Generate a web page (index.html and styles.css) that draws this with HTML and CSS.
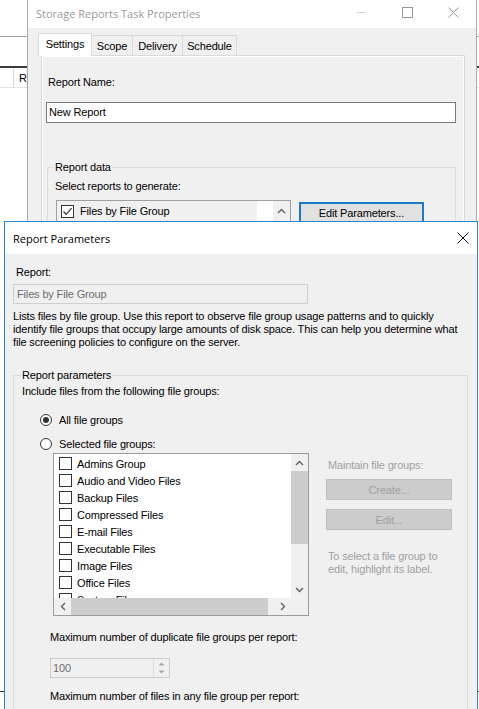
FILE: index.html
```html
<!DOCTYPE html>
<html>
<head>
<meta charset="utf-8">
<title>Report Parameters</title>
<link rel="stylesheet" href="styles.css">
</head>
<body>
<div class="desk">
  <div class="bgwin">
    <div class="bg-toolbar"></div>
    <div class="bg-gap"></div>
    <div class="bg-header"><span class="bg-col1"></span><span class="bg-col2">R</span></div>
    <div class="bg-fill"></div>
  </div>

  <div class="win storage">
    <div class="s-title">
      <span class="s-title-text">Storage Reports Task Properties</span>
      <div class="caps">
        <div class="cap"><svg width="11" height="11" viewBox="0 0 11 11"><line x1="0" y1="5.5" x2="10" y2="5.5" stroke="#d4d4d4" stroke-width="1"/></svg></div>
        <div class="cap"><svg width="11" height="11" viewBox="0 0 11 11"><rect x="0.5" y="0.5" width="10" height="10" fill="none" stroke="#999" stroke-width="1"/></svg></div>
        <div class="cap"><svg width="11" height="11" viewBox="0 0 11 11"><path d="M0.5 0.5 L10.5 10.5 M10.5 0.5 L0.5 10.5" stroke="#999" stroke-width="1"/></svg></div>
      </div>
    </div>
    <div class="s-body">
      <div class="tabs">
        <div class="tab sel w-settings">Settings</div>
        <div class="tab w-scope">Scope</div>
        <div class="tab w-delivery">Delivery</div>
        <div class="tab w-schedule">Schedule</div>
      </div>
      <div class="panel">
        <div class="lbl rn-label">Report Name:</div>
        <div class="textbox rn-box">New Report</div>
        <div class="group g1">
          <div class="glabel g1-label">Report data</div>
          <div class="lbl sel-label">Select reports to generate:</div>
          <div class="g1-row">
            <div class="list1">
              <div class="l1-item"><span class="cb"><svg width="11" height="11" viewBox="0 0 11 11"><path d="M1.5 5.5 L4.2 8.3 L9.6 2.2" fill="none" stroke="#333" stroke-width="1.2"/></svg></span><span class="l1-text">Files by File Group</span></div>
              <div class="l1-white"></div>
              <div class="l1-scroll"><svg width="9" height="6" viewBox="0 0 9 6"><path d="M1 5 L4.5 1.5 L8 5" fill="none" stroke="#606060" stroke-width="1.4"/></svg></div>
            </div>
            <div class="btn-edit">Edit Parameters...</div>
          </div>
        </div>
      </div>
    </div>
  </div>

  <div class="win params">
    <div class="p-title">
      <span>Report Parameters</span>
      <svg class="p-close" width="12" height="12" viewBox="0 0 12 12"><path d="M0.5 0.5 L11.5 11.5 M11.5 0.5 L0.5 11.5" stroke="#111" stroke-width="1"/></svg>
    </div>
    <div class="p-body">
      <div class="lbl rep-label">Report:</div>
      <div class="textbox dis rep-box">Files by File Group</div>
      <div class="desc">Lists files by file group. Use this report to observe file group usage patterns and to quickly identify file groups that occupy large amounts of disk space. This can help you determine what file screening policies to configure on the server.</div>
      <div class="group g2">
        <div class="glabel g2-label">Report parameters</div>
        <div class="lbl incl">Include files from the following file groups:</div>
        <div class="radio-row r1"><span class="radio on"></span><span>All file groups</span></div>
        <div class="radio-row r2"><span class="radio"></span><span>Selected file groups:</span></div>
        <div class="fg-row">
          <div class="fglist">
            <div class="fg-items">
              <div class="fg-item"><span class="cb"></span><span>Admins Group</span></div>
              <div class="fg-item"><span class="cb"></span><span>Audio and Video Files</span></div>
              <div class="fg-item"><span class="cb"></span><span>Backup Files</span></div>
              <div class="fg-item"><span class="cb"></span><span>Compressed Files</span></div>
              <div class="fg-item"><span class="cb"></span><span>E-mail Files</span></div>
              <div class="fg-item"><span class="cb"></span><span>Executable Files</span></div>
              <div class="fg-item"><span class="cb"></span><span>Image Files</span></div>
              <div class="fg-item"><span class="cb"></span><span>Office Files</span></div>
              <div class="fg-item"><span class="cb"></span><span>System Files</span></div>
            </div>
            <div class="vsb">
              <div class="sb-btn"><svg width="9" height="6" viewBox="0 0 9 6"><path d="M1 5 L4.5 1.5 L8 5" fill="none" stroke="#606060" stroke-width="1.4"/></svg></div>
              <div class="vthumb"></div>
              <div class="sb-space"></div>
              <div class="sb-btn"><svg width="9" height="6" viewBox="0 0 9 6"><path d="M1 1 L4.5 4.5 L8 1" fill="none" stroke="#606060" stroke-width="1.4"/></svg></div>
            </div>
            <div class="hsb">
              <div class="sb-btn h"><svg width="6" height="9" viewBox="0 0 6 9"><path d="M5 1 L1.5 4.5 L5 8" fill="none" stroke="#606060" stroke-width="1.4"/></svg></div>
              <div class="hthumb"></div>
              <div class="sb-space"></div>
              <div class="sb-btn h"><svg width="6" height="9" viewBox="0 0 6 9"><path d="M1 1 L4.5 4.5 L1 8" fill="none" stroke="#606060" stroke-width="1.4"/></svg></div>
            </div>
            <div class="corner"></div>
          </div>
          <div class="fg-side">
            <div class="lbl dim maint">Maintain file groups:</div>
            <div class="btn-dis create">Create...</div>
            <div class="btn-dis editb">Edit...</div>
            <div class="lbl dim hint">To select a file group to<br>edit, highlight its label.</div>
          </div>
        </div>
        <div class="lbl maxdup">Maximum number of duplicate file groups per report:</div>
        <div class="spin">
          <span class="spin-val">100</span>
          <div class="spin-btns">
            <div class="spin-b"><svg width="7" height="4" viewBox="0 0 7 4"><path d="M0.5 3.5 L3.5 0.5 L6.5 3.5 Z" fill="#a8a8a8"/></svg></div>
            <div class="spin-b"><svg width="7" height="4" viewBox="0 0 7 4"><path d="M0.5 0.5 L3.5 3.5 L6.5 0.5 Z" fill="#a8a8a8"/></svg></div>
          </div>
        </div>
        <div class="lbl maxfiles">Maximum number of files in any file group per report:</div>
      </div>
    </div>
  </div>
</div>
</body>
</html>
```

FILE: styles.css
```css
* { box-sizing: border-box; }
html, body { margin: 0; padding: 0; }
body {
  width: 479px; height: 709px; overflow: hidden; background: #fff;
  font-family: "Liberation Sans", Arial, sans-serif; font-size: 11px; letter-spacing: -0.15px; color: #000;
}
.desk { position: relative; width: 479px; height: 709px; overflow: hidden; }

/* background window */
.bgwin { position: absolute; left: 0; top: 0; width: 479px; height: 709px; display: flex; flex-direction: column; background: #fff; }
.bg-toolbar { height: 37px; border-bottom: 1px solid #a0a0a0; flex: none; }
.bg-gap { height: 31px; border-bottom: 2px solid #3c3c3c; flex: none; }
.bg-header { height: 20px; border-bottom: 1px solid #e3e3e3; display: flex; align-items: center; flex: none; }
.bg-col1 { width: 14px; height: 100%; border-right: 1px solid #d6d6d6; }
.bg-col2 { padding-left: 5px; }
.bg-fill { height: 604px; border-bottom: 1px solid #333; flex: none; }

.win { position: absolute; display: flex; flex-direction: column; }

/* storage window */
.storage { left: 27px; top: 0; width: 450px; height: 709px; border: 1px solid #aaa; border-top: none; background: #f0f0f0; }
.s-title { height: 28px; flex: none; background: #fff; display: flex; align-items: center; padding-left: 8px; }
.s-title-text { font-family: "Open Sans", "Noto Sans", sans-serif; font-size: 11px; letter-spacing: normal; color: #9a9a9a; padding-bottom: 2px; }
.caps { margin-left: auto; display: flex; height: 100%; }
.cap { width: 46px; height: 100%; display: flex; align-items: center; justify-content: center; padding-bottom: 4px; }
.s-body { padding: 5px 0 0 10px; flex: 1; display: flex; flex-direction: column; }
.tabs { display: flex; align-items: flex-end; height: 22px; position: relative; z-index: 1; flex: none; }
.tab { height: 20px; border: 1px solid #d9d9d9; border-bottom: none; border-left: none; background: #f0f0f0; display: flex; align-items: center; justify-content: center; padding-top: 1px; }
.tab.sel { height: 23px; border-left: 1px solid #d9d9d9; background: #fff; margin-bottom: -1px; padding-top: 0; padding-bottom: 2px; }
.w-settings { width: 54px; }
.w-scope { width: 41px; }
.w-delivery { width: 50px; }
.w-schedule { width: 54px; }
.panel { margin-left: 3px; width: 424px; flex: 1; border: 1px solid #d9d9d9; box-shadow: inset 0 0 0 1px #fff; background: #f0f0f0; padding: 20px 0 0 4px; display: flex; flex-direction: column; }
.lbl { line-height: 13px; white-space: nowrap; }
.rn-label { margin-left: 2px; }
.textbox { background: #fff; border: 1px solid #7a7a7a; line-height: 13px; display: flex; align-items: center; }
.rn-box { margin-top: 13px; width: 410px; height: 21px; padding-left: 2px; }
.group { border: 1px solid #dcdcdc; display: flex; flex-direction: column; }
.glabel { align-self: flex-start; line-height: 13px; background: #f0f0f0; padding: 0 1px; margin-top: -7px; }
.g1 { margin-top: 44px; margin-left: 1px; width: 409px; flex: 1; }
.g1-label { margin-left: 6px; }
.sel-label { margin-top: 6px; margin-left: 7px; }
.g1-row { display: flex; margin-top: 7px; margin-left: 8px; }
.list1 { width: 235px; height: 60px; border: 1px solid #a0a0a0; background: #fff; display: flex; }
.l1-item { width: 200px; height: 20px; background: #f0f0f0; display: flex; align-items: center; padding-left: 4px; }
.l1-text { margin-left: 6px; }
.l1-white { width: 16px; }
.l1-scroll { width: 17px; background: #f0f0f0; display: flex; justify-content: center; padding-top: 7px; }
.cb { width: 13px; height: 13px; border: 1px solid #333; background: #fff; display: flex; align-items: center; justify-content: center; flex: none; }
.btn-edit { margin-left: 8px; margin-top: 2px; width: 125px; height: 22px; border: 2px solid #1c79c9; background: #e1e1e1; display: flex; align-items: center; justify-content: center; }

/* params dialog */
.params { left: 4px; top: 221px; width: 474px; height: 500px; border: 1px solid #2a86cc; background: #f0f0f0; z-index: 2; }
.p-title { height: 32px; flex: none; background: #fff; display: flex; align-items: center; padding-left: 8px; font-family: "Open Sans", "Noto Sans", sans-serif; font-size: 11px; letter-spacing: normal; color: #000; }
.p-close { margin-left: auto; margin-right: 8px; }
.p-body { padding-left: 8px; display: flex; flex-direction: column; flex: 1; }
.rep-label { margin-top: 12px; margin-left: 3px; }
.dis { background: #f0f0f0; border-color: #cfcfcf; color: #6d6d6d; }
.rep-box { margin-top: 5px; width: 295px; height: 20px; padding-left: 3px; }
.desc { margin-top: 6px; width: 450px; line-height: 13px; }
.g2 { margin-top: 26px; width: 455px; flex: 1; }
.g2-label { margin-left: 7px; }
.incl { margin-top: 3px; margin-left: 8px; }
.radio-row { display: flex; align-items: center; height: 17px; margin-left: 26px; }
.r1 { margin-top: 13px; }
.r2 { margin-top: 7px; }
.radio { width: 12px; height: 12px; border: 1px solid #333; border-radius: 50%; background: #fff; margin-right: 7px; display: flex; align-items: center; justify-content: center; }
.radio.on::after { content: ""; width: 6px; height: 6px; border-radius: 50%; background: #333; }
.fg-row { display: flex; margin-left: 39px; margin-top: 1px; }
.fglist { width: 256px; height: 163px; border: 1px solid #9c9c9c; display: grid; grid-template-columns: 1fr 17px; grid-template-rows: 1fr 17px; background: #fff; }
.fg-items { overflow: hidden; padding-top: 1px; }
.fg-item { height: 17px; display: flex; align-items: center; padding-left: 5px; white-space: nowrap; }
.fg-item .cb { margin-right: 5px; }
.vsb { background: #f0f0f0; display: flex; flex-direction: column; }
.sb-btn { width: 17px; height: 17px; display: flex; align-items: center; justify-content: center; flex: none; }
.vthumb { height: 73px; background: #cdcdcd; flex: none; }
.sb-space { flex: 1; }
.hsb { background: #f0f0f0; display: flex; }
.hthumb { width: 197px; background: #cdcdcd; flex: none; }
.corner { background: #f0f0f0; }
.fg-side { margin-left: 17px; width: 126px; padding-top: 6px; display: flex; flex-direction: column; }
.dim { color: #a0a0a0; }
.maint { margin-left: 2px; }
.btn-dis { height: 21px; background: #cccccc; border: 1px solid #bfbfbf; color: #a0a0a0; display: flex; align-items: center; justify-content: center; }
.create { margin-top: 7px; }
.editb { margin-top: 9px; }
.hint { margin-top: 20px; margin-left: 2px; }
.maxdup { margin-top: 15px; margin-left: 36px; }
.spin { margin-top: 14px; margin-left: 36px; width: 120px; height: 20px; border: 1px solid #cccccc; background: #f0f0f0; display: flex; }
.spin-val { color: #6d6d6d; padding-left: 2px; line-height: 18px; flex: 1; }
.spin-btns { width: 15px; margin: 1px 1px 1px 0; border-left: 1px solid #d9d9d9; display: flex; flex-direction: column; }
.spin-b { flex: 1; display: flex; align-items: center; justify-content: center; }
.maxfiles { margin-top: 12px; margin-left: 36px; }
```
